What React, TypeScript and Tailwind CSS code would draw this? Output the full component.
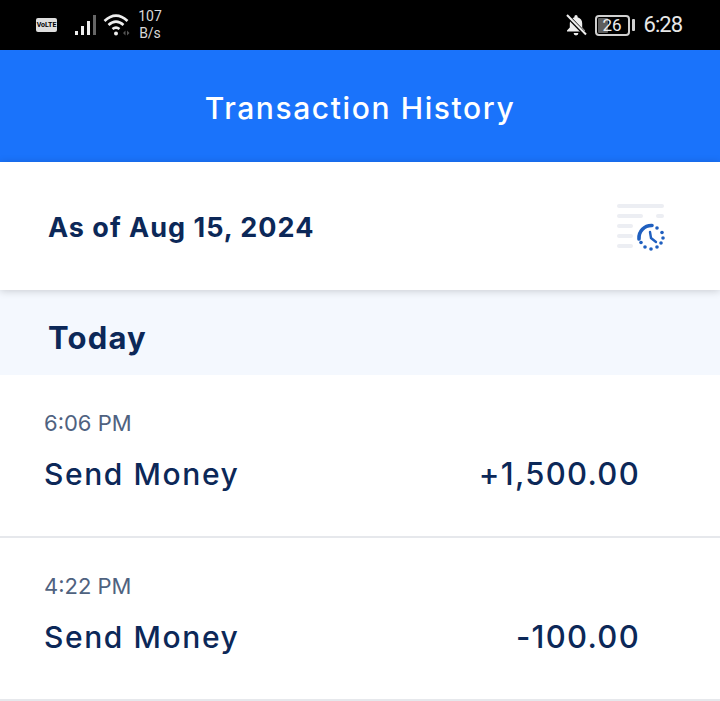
const font = { fontFamily: 'Inter, "Noto Sans", sans-serif' };

function Row({ time, amount }: { time: string; amount: string }) {
  return (
    <div className="h-[163px] border-b-2 border-[#e6e8ec] bg-white pl-[44px] pr-[80px] pt-[34px]">
      <div className="h-[28px] text-[22px] leading-[28px] text-[#4f6280]">{time}</div>
      <div className="mt-[16px] flex items-center justify-between pt-[1px] text-[#0c2858]">
        <span className="text-[30px] leading-[40px] font-medium tracking-[1.6px]">Send Money</span>
        <span className="text-[31px] leading-[40px] font-medium tracking-[1.3px]">{amount}</span>
      </div>
    </div>
  );
}

function StatusBar() {
  return (
    <div className="flex h-[50px] items-center justify-between bg-black pl-[36px] pr-[38px] text-[#e8e8e8]" style={{ fontFamily: 'Roboto, sans-serif' }}>
      <div className="flex items-center">
        <div className="flex h-[14px] w-[21px] items-center justify-center rounded-[2px] bg-[#dedede] text-[7px] leading-none font-bold text-black">VoLTE</div>
        <svg width="22" height="22" viewBox="0 0 22 22" className="ml-[18px]">
          <rect x="0" y="17" width="3" height="4" fill="#eee" />
          <rect x="6" y="12" width="3" height="9" fill="#eee" />
          <rect x="12" y="7" width="3" height="14" fill="#eee" />
          <rect x="18" y="1" width="3" height="20" fill="#666" />
        </svg>
        <svg width="30" height="24" viewBox="0 0 30 24" className="ml-[6px]" fill="none">
          <path d="M1.5 8 C9 1 17 1 24.5 8" stroke="#eee" strokeWidth="2.6" />
          <path d="M5.5 12 C10.5 7.5 15.5 7.5 20.5 12" stroke="#eee" strokeWidth="2.6" />
          <path d="M9.5 16 C12 14 14 14 16.5 16" stroke="#eee" strokeWidth="2.6" />
          <circle cx="13" cy="20.5" r="2" fill="#eee" />
          <path d="M20 20 l2.5 -2.5 v5 z M24 17.5 l2.5 2.5 l-2.5 2.5 z" fill="#555" />
        </svg>
        <div className="ml-[2px] w-[30px] text-center text-[14px] leading-[17px] text-[#d8d8d8]">
          <div>107</div>
          <div>B/s</div>
        </div>
      </div>
      <div className="flex items-center">
        <svg width="22" height="24" viewBox="0 0 22 24" fill="#eee">
          <path d="M11 2 a1.6 1.6 0 0 1 1.6 1.6 v.6 c3 .8 4.6 3.2 4.6 6.2 v4 l2.8 3.1 v.9 H2 v-.9 l2.8 -3.1 v-4 c0 -3 1.6 -5.4 4.6 -6.2 v-.6 A1.6 1.6 0 0 1 11 2 z" />
          <path d="M8.6 20 h4.8 a2.4 2.4 0 0 1 -4.8 0 z" />
          <path d="M1 1.5 L21 22" stroke="#000" strokeWidth="4" />
          <path d="M2 2 L21 21.5" stroke="#eee" strokeWidth="2" />
        </svg>
        <div className="relative ml-[8px] flex h-[21px] w-[35px] items-center justify-center overflow-hidden rounded-[4px] border-2 border-[#d0d0d0] text-[17px] leading-none text-[#eee]">
          <div className="absolute inset-y-[1px] left-[1px] w-[10px] rounded-[1px] bg-[#5e5e5e]" />
          <span className="relative">26</span>
        </div>
        <div className="ml-[2px] h-[12px] w-[3px] rounded-[1px] bg-[#d0d0d0]" />
        <div className="ml-[9px] text-[22px] leading-none tracking-[-1px] text-[#e8e8e8]">6:28</div>
      </div>
    </div>
  );
}

function HistoryIcon() {
  return (
    <svg width="52" height="52" viewBox="0 0 52 52" fill="none" className="mt-[4px]">
      <g stroke="#eceef3" strokeWidth="4" strokeLinecap="round">
        <path d="M5 4 H48" />
        <path d="M5 14 H27" />
        <path d="M44 14 H48" />
        <path d="M5 24 H17" />
        <path d="M5 34 H17" />
        <path d="M5 44 H17" />
      </g>
      <path d="M25 37 A12.5 12.5 0 0 1 38 23.5" stroke="#1f5fbf" strokeWidth="3.6" strokeLinecap="round" />
      <path d="M36 30 L37 36 L42 40" stroke="#1f5fbf" strokeWidth="2.4" strokeLinecap="round" />
      <g fill="#1f5fbf">
        <circle cx="43" cy="26" r="1.8" />
        <circle cx="48" cy="30.5" r="1.8" />
        <circle cx="49" cy="36" r="1.8" />
        <circle cx="47" cy="41" r="1.8" />
        <circle cx="43" cy="45" r="1.8" />
        <circle cx="37" cy="47" r="1.8" />
        <circle cx="31" cy="45" r="1.8" />
        <circle cx="27" cy="40.5" r="1.8" />
      </g>
    </svg>
  );
}

export default function App() {
  return (
    <div className="h-[701px] w-[720px] overflow-hidden bg-white" style={font}>
      <StatusBar />
      <div className="flex h-[112px] items-center justify-center bg-[#1a73fb] pt-[4px] text-[30px] font-medium tracking-[1.6px] text-white">
        Transaction History
      </div>
      <div className="relative z-10 flex h-[128px] items-center justify-between bg-white pl-[48px] pr-[54px] shadow-[0_1px_8px_rgba(0,0,0,0.18)]">
        <span className="pt-[4px] text-[27px] font-bold tracking-[1px] text-[#0c2858]">As of Aug 15, 2024</span>
        <HistoryIcon />
      </div>
      <div className="flex h-[85px] items-center bg-[#f4f8fe] pl-[48px] pt-[11px] text-[31px] font-bold tracking-[1.2px] text-[#0c2858]">Today</div>
      <Row time="6:06 PM" amount="+1,500.00" />
      <Row time="4:22 PM" amount="-100.00" />
    </div>
  );
}
